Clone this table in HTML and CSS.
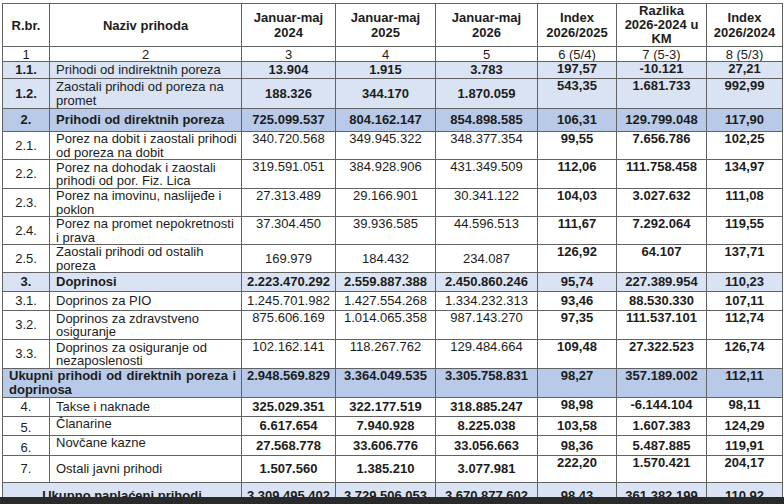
FILE: index.html
```html
<!DOCTYPE html>
<html lang="bs">
<head>
  <meta charset="UTF-8" />
  <title>Prihodi januar-maj</title>
  <link rel="stylesheet" href="styles.css">
</head>
<body>
  <table class="prihodi">
    <colgroup>
      <col class="c-rbr">
      <col class="c-naziv">
      <col class="c-2024">
      <col class="c-2025">
      <col class="c-2026">
      <col class="c-idx">
      <col class="c-razlika">
      <col class="c-idx2">
    </colgroup>
    <tr class="head h41">
      <th>R.br.</th>
      <th>Naziv prihoda</th>
      <th>Januar-maj<br>2024</th>
      <th>Januar-maj<br>2025</th>
      <th>Januar-maj<br>2026</th>
      <th>Index<br>2026/2025</th>
      <th class="razlika">Razlika<br>2026-2024 u<br>KM</th>
      <th>Index<br>2026/2024</th>
    </tr>
    <tr class="colnum h15">
      <td>1</td><td>2</td><td>3</td><td>4</td><td>5</td><td>6 (5/4)</td><td>7 (5-3)</td><td>8 (5/3)</td>
    </tr>
    <tr class="light h17">
      <td class="rbr b">1.1.</td>
      <td class="name">Prihodi od indirektnih poreza</td>
      <td class="b">13.904</td><td class="b">1.915</td><td class="b">3.783</td>
      <td class="b top">197,57</td><td class="b top">-10.121</td><td class="b top">27,21</td>
    </tr>
    <tr class="light h30">
      <td class="rbr b">1.2.</td>
      <td class="name">Zaostali prihodi od poreza na promet</td>
      <td class="b">188.326</td><td class="b">344.170</td><td class="b">1.870.059</td>
      <td class="b top">543,35</td><td class="b top">1.681.733</td><td class="b top">992,99</td>
    </tr>
    <tr class="dark bold h23">
      <td class="rbr">2.</td>
      <td class="name">Prihodi od direktnih poreza</td>
      <td>725.099.537</td><td>804.162.147</td><td>854.898.585</td>
      <td>106,31</td><td>129.799.048</td><td>117,90</td>
    </tr>
    <tr class="h28">
      <td class="rbr">2.1.</td>
      <td class="name">Porez na dobit i zaostali prihodi od poreza na dobit</td>
      <td class="top">340.720.568</td><td class="top">349.945.322</td><td class="top">348.377.354</td>
      <td class="b top">99,55</td><td class="b top">7.656.786</td><td class="b top">102,25</td>
    </tr>
    <tr class="h29">
      <td class="rbr">2.2.</td>
      <td class="name">Porez na dohodak i zaostali prihodi od por. Fiz. Lica</td>
      <td class="top">319.591.051</td><td class="top">384.928.906</td><td class="top">431.349.509</td>
      <td class="b top">112,06</td><td class="b top">111.758.458</td><td class="b top">134,97</td>
    </tr>
    <tr class="h28">
      <td class="rbr">2.3.</td>
      <td class="name">Porez na imovinu, naslijeđe i poklon</td>
      <td class="top">27.313.489</td><td class="top">29.166.901</td><td class="top">30.341.122</td>
      <td class="b top">104,03</td><td class="b top">3.027.632</td><td class="b top">111,08</td>
    </tr>
    <tr class="h28">
      <td class="rbr">2.4.</td>
      <td class="name">Porez na promet nepokretnosti i prava</td>
      <td class="top">37.304.450</td><td class="top">39.936.585</td><td class="top">44.596.513</td>
      <td class="b top">111,67</td><td class="b top">7.292.064</td><td class="b top">119,55</td>
    </tr>
    <tr class="h28">
      <td class="rbr">2.5.</td>
      <td class="name">Zaostali prihodi od ostalih poreza</td>
      <td>169.979</td><td>184.432</td><td>234.087</td>
      <td class="b top">126,92</td><td class="b top">64.107</td><td class="b top">137,71</td>
    </tr>
    <tr class="light bold h19">
      <td class="rbr">3.</td>
      <td class="name">Doprinosi</td>
      <td>2.223.470.292</td><td>2.559.887.388</td><td>2.450.860.246</td>
      <td>95,74</td><td>227.389.954</td><td>110,23</td>
    </tr>
    <tr class="h19">
      <td class="rbr">3.1.</td>
      <td class="name">Doprinos za PIO</td>
      <td>1.245.701.982</td><td>1.427.554.268</td><td>1.334.232.313</td>
      <td class="b">93,46</td><td class="b">88.530.330</td><td class="b">107,11</td>
    </tr>
    <tr class="h29">
      <td class="rbr">3.2.</td>
      <td class="name">Doprinos za zdravstveno osiguranje</td>
      <td class="top">875.606.169</td><td class="top">1.014.065.358</td><td class="top">987.143.270</td>
      <td class="b top">97,35</td><td class="b top">111.537.101</td><td class="b top">112,74</td>
    </tr>
    <tr class="h29">
      <td class="rbr">3.3.</td>
      <td class="name">Doprinos za osiguranje od nezaposlenosti</td>
      <td class="top">102.162.141</td><td class="top">118.267.762</td><td class="top">129.484.664</td>
      <td class="b top">109,48</td><td class="b top">27.322.523</td><td class="b top">126,74</td>
    </tr>
    <tr class="dark bold h29">
      <td class="name total" colspan="2">Ukupni prihodi od direktnih poreza i doprinosa</td>
      <td class="top">2.948.569.829</td><td class="top">3.364.049.535</td><td class="top">3.305.758.831</td>
      <td class="top">98,27</td><td class="top">357.189.002</td><td class="top">112,11</td>
    </tr>
    <tr class="h19">
      <td class="rbr">4.</td>
      <td class="name">Takse i naknade</td>
      <td class="b">325.029.351</td><td class="b">322.177.519</td><td class="b">318.885.247</td>
      <td class="b top">98,98</td><td class="b top">-6.144.104</td><td class="b top">98,11</td>
    </tr>
    <tr class="h19">
      <td class="rbr low">5.</td>
      <td class="name top">Članarine</td>
      <td class="b">6.617.654</td><td class="b">7.940.928</td><td class="b">8.225.038</td>
      <td class="b">103,58</td><td class="b">1.607.383</td><td class="b">124,29</td>
    </tr>
    <tr class="h20">
      <td class="rbr low">6.</td>
      <td class="name top">Novčane kazne</td>
      <td class="b">27.568.778</td><td class="b">33.606.776</td><td class="b">33.056.663</td>
      <td class="b">98,36</td><td class="b">5.487.885</td><td class="b">119,91</td>
    </tr>
    <tr class="h27">
      <td class="rbr">7.</td>
      <td class="name">Ostali javni prihodi</td>
      <td class="b">1.507.560</td><td class="b">1.385.210</td><td class="b">3.077.981</td>
      <td class="b top">222,20</td><td class="b top">1.570.421</td><td class="b top">204,17</td>
    </tr>
    <tr class="light bold h27">
      <td class="grand" colspan="2">Ukupno naplaćeni prihodi</td>
      <td>3.309.495.402</td><td>3.729.506.053</td><td>3.670.877.602</td>
      <td>98,43</td><td>361.382.199</td><td>110,92</td>
    </tr>
  </table>

  <div class="bottom-bar"></div>
</body>
</html>
```

FILE: styles.css
```css
body {
  margin: 0;
  padding: 3px 2px 0 2px;
  background: #ffffff;
  font-family: "Liberation Sans", Arial, sans-serif;
  color: #1c1c1c;
  overflow: hidden;
}

.prihodi {
  border-collapse: collapse;
  table-layout: fixed;
  width: 780px;
  font-size: 13px;
  line-height: 13.5px;
}

.c-rbr { width: 47px; }
.c-naziv { width: 192px; }
.c-2024 { width: 94px; }
.c-2025 { width: 100px; }
.c-2026 { width: 102px; }
.c-idx { width: 79px; }
.c-razlika { width: 90px; }
.c-idx2 { width: 76px; }

.prihodi th,
.prihodi td {
  border: 1px solid #626262;
  padding: 0 3px;
  text-align: center;
  vertical-align: middle;
  overflow: hidden;
  white-space: normal;
}

.prihodi th {
  font-weight: bold;
  line-height: 15px;
}

.prihodi th.razlika {
  line-height: 14px;
}

.prihodi td.name {
  text-align: left;
  padding: 0 2px 0 6px;
}

.prihodi td.total {
  text-align: justify;
  text-align-last: left;
  padding: 0 5px 0 6px;
  vertical-align: top;
}

.prihodi td.grand {
  text-align: center;
}

.prihodi td.top {
  vertical-align: top;
}

.prihodi td.low {
  vertical-align: bottom;
  padding-bottom: 1px;
}

.b,
.bold td {
  font-weight: bold;
}

.light td {
  background: #dae3f3;
}

.dark td {
  background: #b8cae8;
}

.colnum td {
  line-height: 13px;
}

.h15 { height: 15px; }
.h17 { height: 17px; }
.h19 { height: 19px; }
.h20 { height: 20px; }
.h23 { height: 23px; }
.h27 { height: 27px; }
.h28 { height: 28px; }
.h29 { height: 29px; }
.h30 { height: 30px; }
.h41 { height: 41px; }

.bottom-bar {
  position: fixed;
  left: 0;
  right: 0;
  bottom: 0;
  height: 7px;
  background: #2a2a2a;
}
```
